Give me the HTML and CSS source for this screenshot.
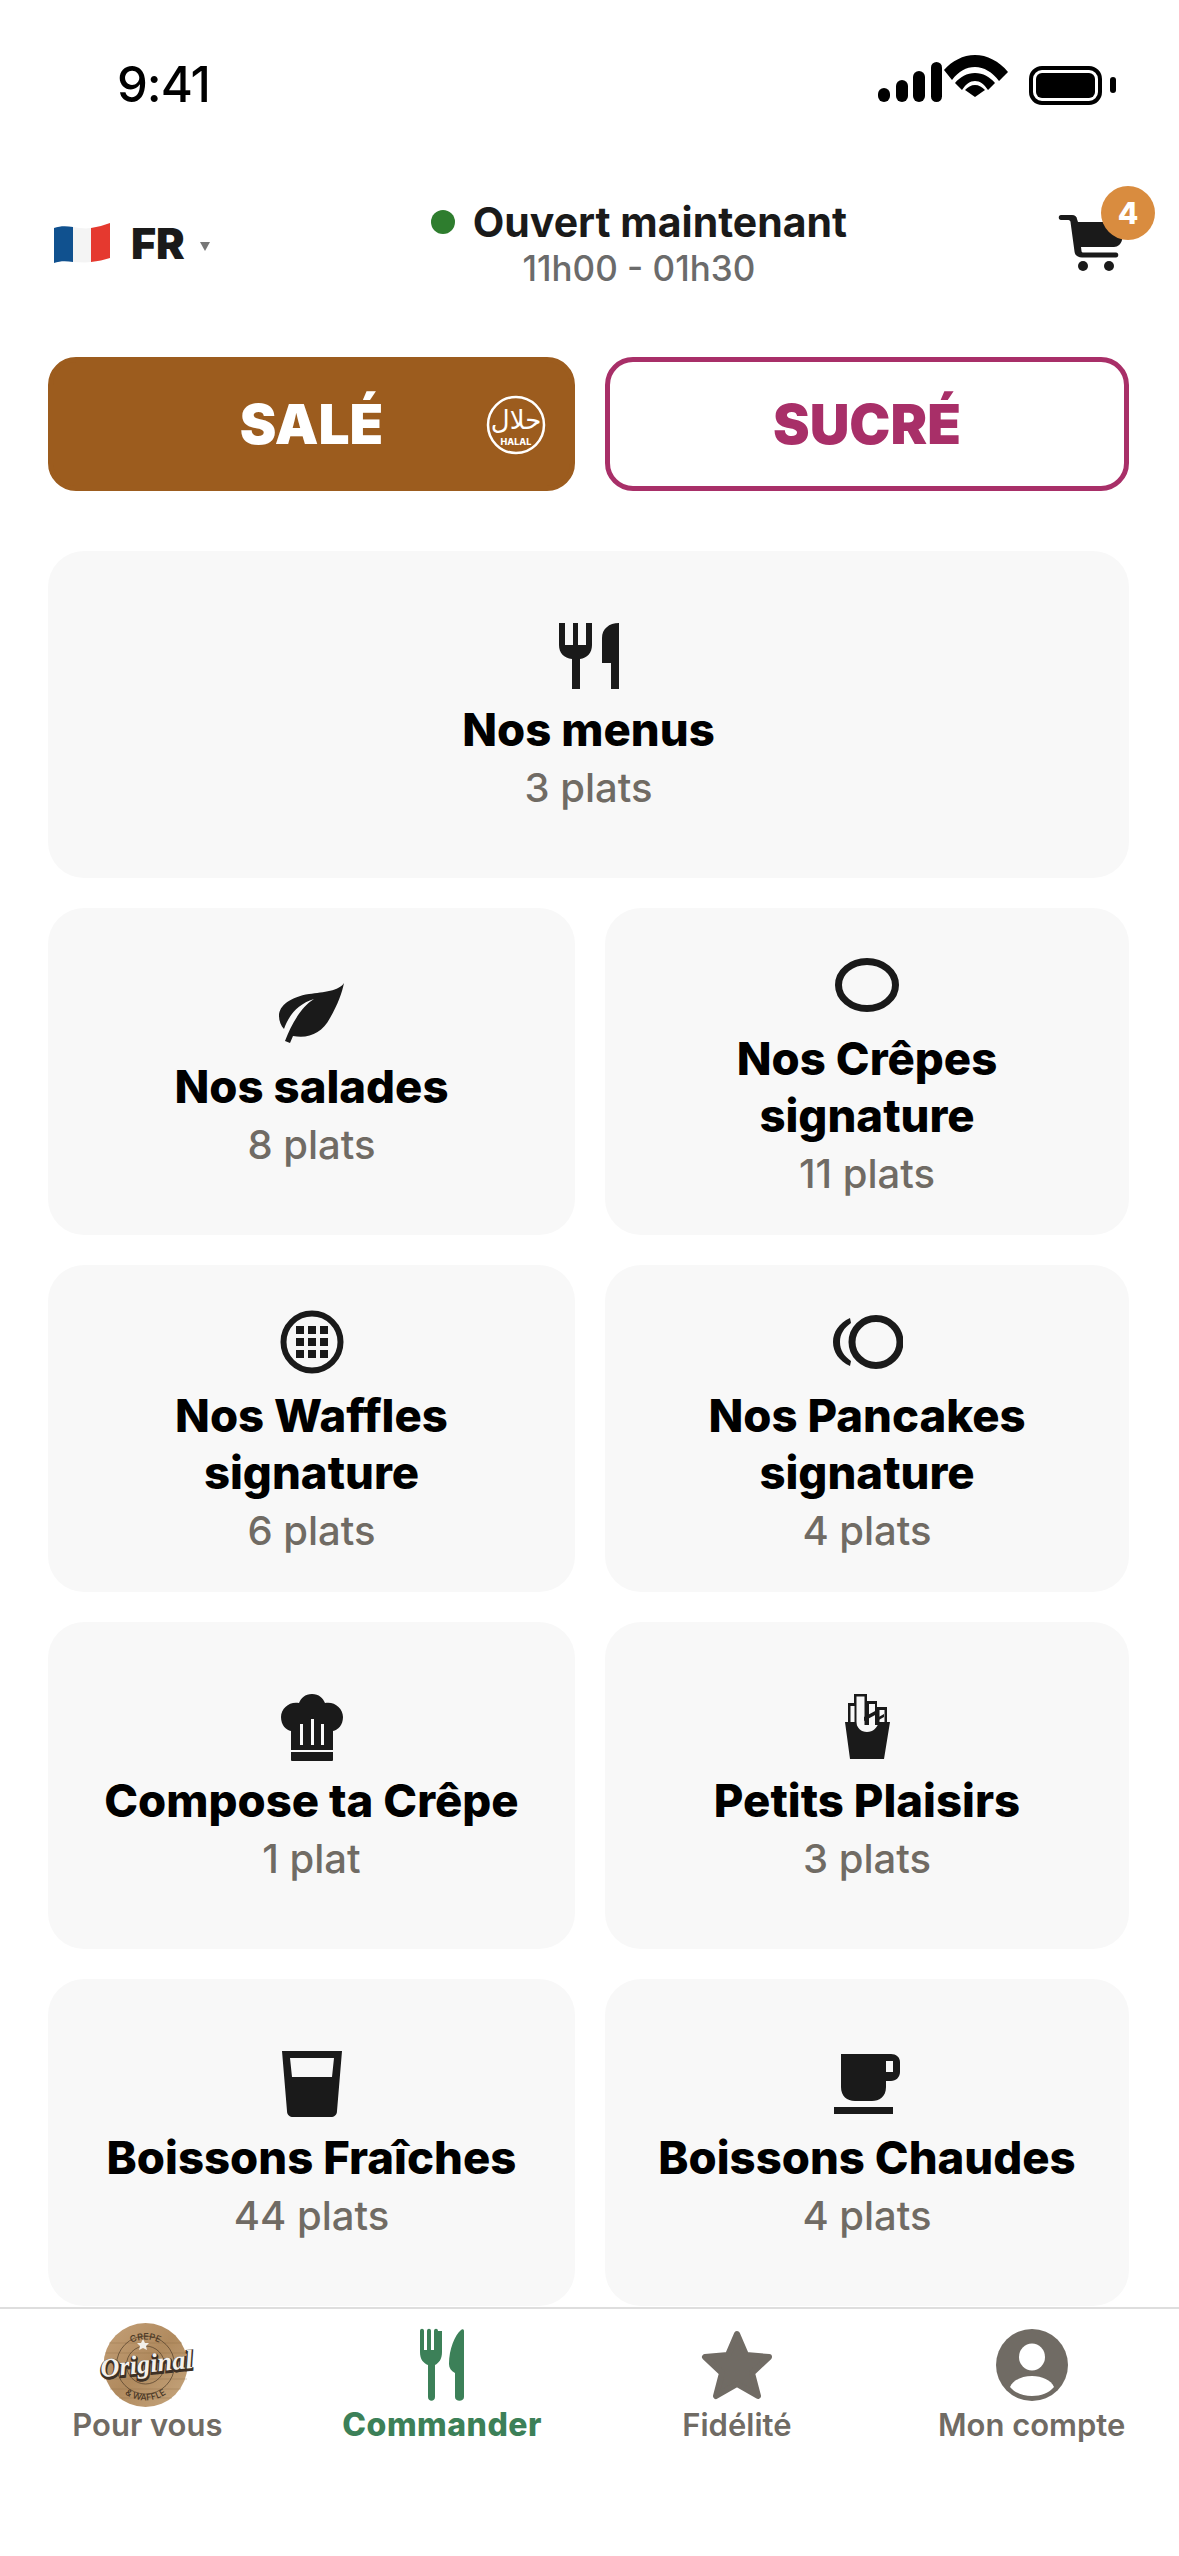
FILE: index.html
```html
<!DOCTYPE html>
<html lang="fr">
<head>
    <meta charset="UTF-8">
    <meta name="viewport" content="width=device-width, initial-scale=1.0">
    <title>Commander</title>
    <link rel="stylesheet" href="styles.css">
</head>
<body>
<div class="app">
    <!-- status bar -->
    <div class="status_bar">
        <span class="clock">9:41</span>
        <div class="status_icons">
            <svg class="signal" width="64" height="40" viewBox="0 0 64 40"><rect x="0" y="26" width="12" height="14" rx="6"/><rect x="18" y="18" width="12" height="22" rx="6"/><rect x="35" y="9" width="12" height="31" rx="6"/><rect x="53" y="0" width="11" height="40" rx="5.500"/></svg>
            <svg class="wifi" width="66" height="42" viewBox="0 0 66 42"><path d="M2 15C10 6 21 0 33 0s24 6 33 17l-9 9C50 17 42 12 33 12S17 16 10 25z"/><path d="M13 28C18 22 25 18 33 18s15 4 20 10l-7 7C42 29 38 26 33 26s-9 3-13 9z"/><path d="M33 30c4 0 7 2 10 5l-10 7-10-7c3-3 6-5 10-5z"/></svg>
            <svg class="battery" width="87" height="39" viewBox="0 0 87 39"><rect x="2" y="2" width="69" height="35" rx="11" fill="none" stroke="#000" stroke-width="4"/><rect x="7" y="7" width="59" height="25" rx="6"/><rect x="81" y="11" width="6" height="16" rx="3"/></svg>
        </div>
    </div>

    <!-- top bar -->
    <header class="top_bar">
        <div class="lang">
            <svg class="flag" width="56" height="40" viewBox="0 0 56 40">
                <path d="M0 5c6-2 12-2 19-1v35c-7-1-13-1-19 1z" fill="#10518f"/>
                <path d="M19 4c6 1 12 2 18 1v34c-6 1-12 0-18 0z" fill="#f4f4f4"/>
                <path d="M37 5c7-1 13-3 19-5v35c-6 2-12 3-19 4z" fill="#e5392f"/>
            </svg>
            <span class="lang_code">FR</span>
            <span class="caret"></span>
        </div>
        <div class="opening">
            <div class="open_now"><span class="dot"></span><span>Ouvert maintenant</span></div>
            <div class="hours">11h00 - 01h30</div>
        </div>
        <div class="cart">
            <svg width="66" height="60" viewBox="0 0 66 60" fill="#1a1a1a">
                <path d="M3 1h11c3 0 5 2 5 4l1 3h44c2 0 2 2 2 3l-2 15c-1 4-4 7-8 7H23l.5 4c0 1 1 1.500 2 1.500H58c3 0 3 5 0 5H24c-4 0-7-2-7.500-6L12.500 8c0-1-1-2-2-2H3c-3 0-3-5 0-5z"/>
                <circle cx="25" cy="52" r="5"/><circle cx="51" cy="52" r="5"/>
            </svg>
            <span class="badge">4</span>
        </div>
    </header>

    <!-- sale / sucre -->
    <div class="switch">
        <button class="switch_btn sale">SALÉ
            <svg class="halal" width="60" height="60" viewBox="0 0 60 60">
                <circle cx="30" cy="30" r="28" fill="none" stroke="#fff" stroke-width="2.500"/>
                <text class="halal_ar" x="30" y="34" text-anchor="middle">حلال</text>
                <text class="halal_en" x="30" y="50" text-anchor="middle">HALAL</text>
            </svg>
        </button>
        <button class="switch_btn sucre">SUCRÉ</button>
    </div>

    <!-- categories -->
    <main class="cats">
        <a class="cat cat_wide">
            <div class="cat_icon">
                <svg width="60" height="66" viewBox="0 0 60 66"><path d="M0 0h6v22h8V0h5v22h8V0h6v22c0 8-5 13-12 14v30h-8V36C5 35 0 30 0 22z"/><path d="M60 0v66h-8V40h-9V15C43 6 50 0 60 0z"/></svg>
            </div>
            <h2>Nos menus</h2>
            <p>3 plats</p>
        </a>
        <a class="cat">
            <div class="cat_icon">
                <svg width="65" height="61" viewBox="0 0 65 61"><path d="M65 0C60 8 45 9 30 11 12 14 0 22 0 33c0 5 2 10 5 13 4-12 13-25 30-30C22 24 12 42 6 58l5 2 3-7c16 3 29-3 37-18C59 21 63 10 65 0z"/></svg>
            </div>
            <h2>Nos salades</h2>
            <p>8 plats</p>
        </a>
        <a class="cat">
            <div class="cat_icon">
                <svg width="64" height="54" viewBox="0 0 64 54"><ellipse cx="32" cy="27" rx="28.500" ry="23.500" fill="none" stroke="#1a1a1a" stroke-width="7"/></svg>
            </div>
            <h2>Nos Crêpes signature</h2>
            <p>11 plats</p>
        </a>
        <a class="cat">
            <div class="cat_icon">
                <svg width="64" height="64" viewBox="0 0 64 64"><circle cx="32" cy="32" r="28.500" fill="none" stroke="#1a1a1a" stroke-width="6"/><path d="M16 16h8v8h-8zM28 16h8v8h-8zM40 16h8v8h-8zM16 28h8v8h-8zM28 28h8v8h-8zM40 28h8v8h-8zM16 40h8v8h-8zM28 40h8v8h-8zM40 40h8v8h-8z"/></svg>
            </div>
            <h2>Nos Waffles signature</h2>
            <p>6 plats</p>
        </a>
        <a class="cat">
            <div class="cat_icon">
                <svg width="72" height="54" viewBox="0 0 72 54"><ellipse cx="45" cy="27" rx="24" ry="23.500" fill="none" stroke="#1a1a1a" stroke-width="7"/><path d="M19 3C8 8 2 17 2 27s6 19 17 24l1-5C13 41 9 35 9 27s4-14 11-19z"/></svg>
            </div>
            <h2>Nos Pancakes signature</h2>
            <p>4 plats</p>
        </a>
        <a class="cat">
            <div class="cat_icon">
                <svg width="62" height="67" viewBox="0 0 62 67"><path d="M31 0c7 0 11 4 13 9 9-2 18 5 18 14 0 8-5 13-10 14v25H10V37C5 36 0 31 0 23 0 14 9 7 18 9c2-5 6-9 13-9z"/><rect x="10" y="60" width="42" height="7" rx="1"/><path class="cut" d="M19 30h3v21h-3zM30 25h3v26h-3zM40 30h3v21h-3z"/><rect class="cut" x="10" y="56" width="42" height="2"/></svg>
            </div>
            <h2>Compose ta Crêpe</h2>
            <p>1 plat</p>
        </a>
        <a class="cat">
            <div class="cat_icon">
                <svg width="46" height="66" viewBox="0 0 46 66"><path d="M4 9h6V0h13v7h10v6h10v18H4z"/><path class="cut" d="M6.500 12h4v20h-4zM12.500 2.500h8V34h-8zM25 10h6v24h-6zM35.500 16h5v14h-5z"/><path d="M20 23l13-7v4l-13 7zM33 24l7-4v3l-7 4z"/><path d="M1 28h11c1 6 5 10 11 10s10-4 12-10h11l-6 37H6z"/></svg>
            </div>
            <h2>Petits Plaisirs</h2>
            <p>3 plats</p>
        </a>
        <a class="cat">
            <div class="cat_icon">
                <svg width="60" height="66" viewBox="0 0 60 66"><path fill-rule="evenodd" d="M0 0h60l-5 60c0 4-3 6-6 6H11c-3 0-6-2-6-6zM8 7l2 19h40l2-19z"/></svg>
            </div>
            <h2>Boissons Fraîches</h2>
            <p>44 plats</p>
        </a>
        <a class="cat">
            <div class="cat_icon">
                <svg width="66" height="60" viewBox="0 0 66 60"><path fill-rule="evenodd" d="M7 0h50c5 0 9 3 9 8v10c0 5-4 9-9 9h-5v6c0 10-7 14-14 14H21C13 47 7 42 7 33zM52 7v11h7V7z"/><rect x="0" y="53" width="59" height="7"/></svg>
            </div>
            <h2>Boissons Chaudes</h2>
            <p>4 plats</p>
        </a>
    </main>

    <!-- tab bar -->
    <nav class="tabs">
        <a class="tab">
            <div class="tab_icon">
                <svg width="100" height="84" viewBox="0 0 100 84">
                    <defs>
                        <linearGradient id="wood" x1="0" y1="0" x2="1" y2="1"><stop offset="0" stop-color="#c4a078"/><stop offset="0.5" stop-color="#b08a5e"/><stop offset="1" stop-color="#c8a880"/></linearGradient>
                        <path id="arc_top" d="M18 42a31 31 0 0 1 61 0"/>
                        <path id="arc_bot" d="M13 42a35.500 35.500 0 0 0 71 0"/>
                    </defs>
                    <circle cx="48.500" cy="42" r="42" fill="url(#wood)"/>
                    <path class="planks" d="M12 20h73M8 30h81M7 56h83M13 66h71M22 75h53"/>
                    <circle class="logo_ring" cx="48.500" cy="42" r="29"/>
                    <circle class="logo_ring" cx="48.500" cy="42" r="19"/>
                    <text class="logo_small"><textPath href="#arc_top" startOffset="50%" text-anchor="middle">CREPE</textPath></text>
                    <text class="logo_small"><textPath href="#arc_bot" startOffset="50%" text-anchor="middle">&amp; WAFFLE</textPath></text>
                    <text class="logo_name logo_shadow" x="50" y="51" text-anchor="middle" transform="rotate(-6 50 46)">Original</text>
                    <text class="logo_name" x="50" y="49.500" text-anchor="middle" transform="rotate(-6 50 46)">Original</text>
                    <path d="M46 16l2 4 4 0-3 3 1 4-4-2-4 2 1-4-3-3 4 0z" fill="#f2efe9"/>
                </svg>
            </div>
            <span>Pour vous</span>
        </a>
        <a class="tab tab_active">
            <div class="tab_icon">
                <svg width="44" height="72" viewBox="0 0 44 72"><path d="M0 2c0-3 4-3 4 0v19h3V2c0-3 4-3 4 0v19h3V2c0-3 4-3 4 0l4 0v0 21c0 7-3 11-7 13v32c0 5-7 5-7 0V36C3 34 0 30 0 23z"/><path d="M44 2v66c0 5-9 5-9 0V44c-4-2-6-5-6-9C29 20 35 6 41 1c1-1 3-1 3 1z"/></svg>
            </div>
            <span>Commander</span>
        </a>
        <a class="tab">
            <div class="tab_icon">
                <svg width="72" height="70" viewBox="0 0 72 70"><path class="star" d="M36 4l9 21 23 2-17 16 6 23-21-12-21 12 6-23L4 27l23-2z"/></svg>
            </div>
            <span>Fidélité</span>
        </a>
        <a class="tab">
            <div class="tab_icon">
                <svg width="72" height="72" viewBox="0 0 72 72"><circle cx="36" cy="36" r="36"/><ellipse class="cut_white" cx="36" cy="28" rx="13" ry="13.500"/><path class="cut_white" d="M14 58c3-7 12-11 22-11s19 4 22 11c-5 6-13 9-22 9s-17-3-22-9z"/></svg>
            </div>
            <span>Mon compte</span>
        </a>
    </nav>
</div>
</body>
</html>
```

FILE: styles.css
```css
* {
    padding: 0;
    margin: 0;
    box-sizing: border-box;
}

body {
    background: #fff;
    font-family: Inter, "Liberation Sans", sans-serif;
}

.app {
    width: 1179px;
    height: 2556px;
    overflow: hidden;
    display: flex;
    flex-direction: column;
}

/* status bar */
.status_bar {
    height: 170px;
    padding: 55px 63px 0 117px;
    display: flex;
    justify-content: space-between;
    align-items: flex-start;
}

.clock {
    font-size: 49px;
    font-weight: 500;
    line-height: 60px;
    letter-spacing: -1px;
    color: #000;
}

.status_icons {
    display: flex;
    align-items: flex-start;
}

.signal { margin-top: 7px; }
.battery { margin-left: 21px; margin-top: 11px; }

/* top bar */
.top_bar {
    height: 187px;
    padding: 29px 24px 0 54px;
    display: flex;
    justify-content: space-between;
    align-items: flex-start;
}

.lang {
    display: flex;
    align-items: center;
    margin-top: 23px;
}

.lang_code {
    margin-left: 21px;
    font-size: 43px;
    font-weight: 900;
    line-height: 42px;
    color: #1a1a1a;
}

.caret {
    margin-left: 15px;
    margin-top: 6px;
    border-left: 5px solid transparent;
    border-right: 5px solid transparent;
    border-top: 9px solid #777;
}

.opening {
    display: flex;
    flex-direction: column;
    align-items: center;
    margin-left: 10px;
}

.open_now {
    display: flex;
    align-items: center;
    gap: 18px;
    font-size: 41px;
    font-weight: 700;
    line-height: 46px;
    color: #1a1a1a;
}

.dot {
    width: 24px;
    height: 24px;
    border-radius: 50%;
    background: #2e7d2e;
}

.hours {
    font-size: 35px;
    font-weight: 500;
    line-height: 46px;
    color: #6b6b6b;
}

.cart {
    position: relative;
    width: 97px;
    height: 90px;
    padding-top: 15px;
}

.badge {
    position: absolute;
    top: -13px;
    right: 0;
    width: 54px;
    height: 54px;
    border-radius: 50%;
    background: #d98c3f;
    color: #fff;
    font-size: 30px;
    font-weight: 800;
    line-height: 54px;
    text-align: center;
}

/* sale / sucre switch */
.switch {
    padding-left: 48px;
    display: grid;
    grid-template-columns: 527px 524px;
    gap: 30px;
    margin-bottom: 60px;
}

.switch_btn {
    position: relative;
    height: 134px;
    border-radius: 28px;
    border: 5px solid transparent;
    background: #fff;
    font-family: inherit;
    font-size: 55px;
    font-weight: 900;
}

.sale {
    background: #9c5c1e;
    border-color: #9c5c1e;
    color: #fff;
}

.sucre {
    border-color: #a82f68;
    color: #a82f68;
}

.halal {
    position: absolute;
    right: 24px;
    top: 33px;
}

.halal_ar {
    font-family: "DejaVu Sans", sans-serif;
    font-size: 26px;
    font-weight: 400;
    fill: #fff;
}

.halal_en {
    font-size: 9px;
    font-weight: 800;
    fill: #fff;
}

/* categories */
.cats {
    padding-left: 48px;
    display: grid;
    grid-template-columns: 527px 524px;
    grid-auto-rows: 327px;
    gap: 30px;
    height: 1756px;
}

.cat {
    display: flex;
    flex-direction: column;
    align-items: center;
    justify-content: center;
    padding: 10px 43px 0;
    border-radius: 36px;
    background: #f8f8f8;
    text-align: center;
}

.cat_wide {
    grid-column: span 2;
}

.cat_icon {
    height: 66px;
    margin-bottom: 12px;
    display: flex;
    align-items: center;
    justify-content: center;
    fill: #1a1a1a;
    flex-shrink: 0;
}

.cut {
    fill: #f8f8f8;
}

.cat h2 {
    font-size: 45.5px;
    font-weight: 800;
    line-height: 57px;
    color: #000;
}

.cat p {
    margin-top: 2px;
    font-size: 40px;
    font-weight: 500;
    line-height: 56px;
    color: #706b64;
}

/* tab bar */
.tabs {
    display: grid;
    grid-template-columns: repeat(4, 1fr);
    border-top: 2px solid #dedede;
    padding-top: 14px;
    height: 140px;
    background: #fff;
}

.tab {
    display: flex;
    flex-direction: column;
    align-items: center;
    font-size: 31px;
    font-weight: 600;
    line-height: 38px;
    color: #706b64;
}

.tab_icon {
    height: 84px;
    margin-bottom: -1px;
    display: flex;
    align-items: center;
    fill: #706b64;
}

.tab_icon svg {
    overflow: visible;
}

.tab_active {
    color: #3c8058;
    font-size: 32px;
    font-weight: 800;
    letter-spacing: 0.5px;
}

.tab_active .tab_icon {
    fill: #3c8058;
}

.star {
    stroke: #706b64;
    stroke-width: 6px;
    stroke-linejoin: round;
}

.cut_white {
    fill: #fff;
}

.planks {
    fill: none;
    stroke: #8f6c45;
    stroke-width: 0.6px;
    opacity: 0.6;
}

.logo_ring {
    fill: none;
    stroke: #5b4630;
    stroke-width: 0.8px;
}

.logo_small {
    font-size: 9px;
    font-weight: 500;
    fill: #4a3826;
}

.logo_name {
    font-family: "Liberation Serif", serif;
    font-size: 26.5px;
    font-style: italic;
    font-weight: 700;
    fill: #f4f1ec;
}

.logo_shadow {
    fill: #3d3025;
    stroke: #3d3025;
    stroke-width: 3px;
}
```
